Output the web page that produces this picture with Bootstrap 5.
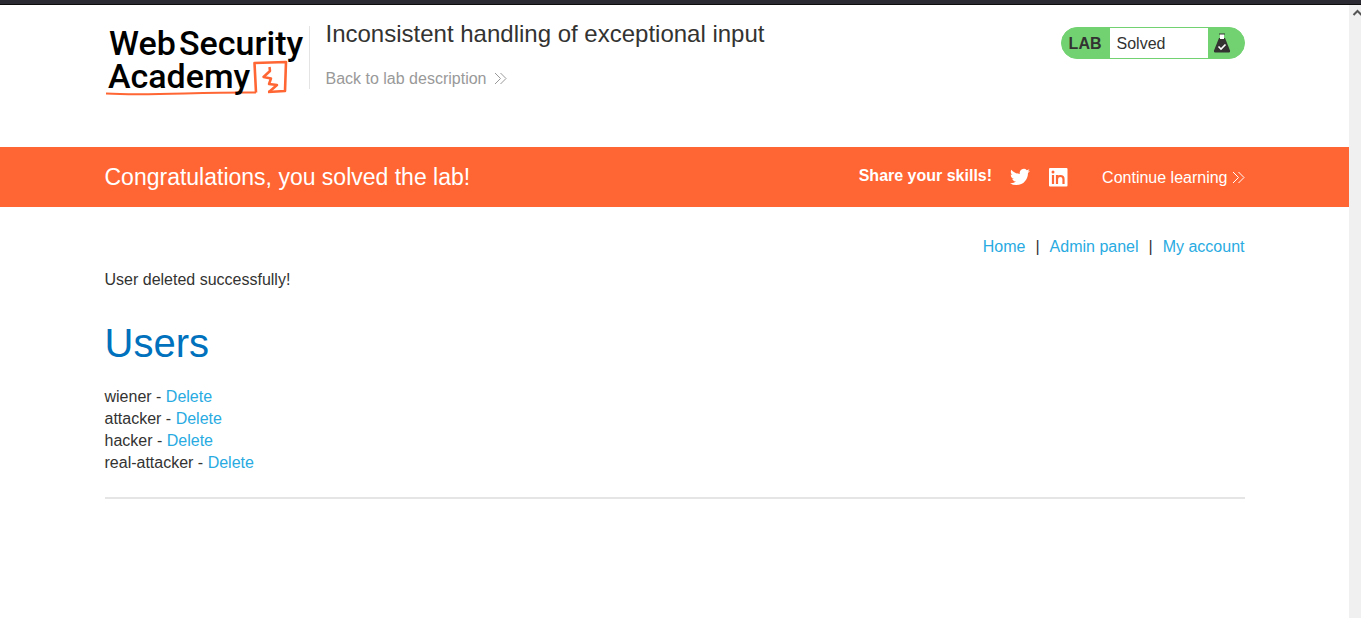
<!DOCTYPE html>
<html lang="en">
<head>
<meta charset="utf-8">
<meta name="viewport" content="width=device-width, initial-scale=1">
<title>Inconsistent handling of exceptional input</title>
<link rel="stylesheet" href="https://cdn.jsdelivr.net/npm/bootstrap@5.3.0/dist/css/bootstrap.min.css">
<style>
body { font: 16px/22px "Liberation Sans", Arial, sans-serif; color: #333332; background: #fff; }
a { color: #29abe2; text-decoration: none; }
.window-edge { height: 5px; background: #2b2a33; border-bottom: 1px solid #0c0c0d; }
.scroll-track { width: 12px; background: #f0f0f0; }
.page-wrap { max-width: 1140px; width: 100%; margin: 0 auto; }
.lab-header { min-height: 142px; padding-top: 16px; }
.brand-mark { width: 204px; height: 80px; overflow: visible; }
.brand-mark text { font: 500 34px Roboto, sans-serif; fill: #000; }
.lab-title { border-left: 1px solid #e4e4e4; margin-top: 5px; height: 63px; padding-left: 16px; }
.lab-title h1 { font-size: 24px; line-height: 26px; margin: -5px 0 21px; }
.back-link { color: #999; }
.lab-status { height: 32px; margin-top: 6px; border: 1px solid #72d271; border-radius: 16px; background: #72d271; overflow: hidden; }
.lab-status strong { padding: 2px 8px 0 7px; }
.lab-status .state { background: #fff; width: 98px; padding: 2px 0 0 7px; }
.lab-status .flask { width: 36px; padding-left: 5px; }
.solved-band { background: #f63; color: #fff; min-height: 60px; }
.solved-band h2 { font-size: 23px; line-height: 28px; }
.solved-band a { color: #fff; }
.share { margin-bottom: 2px; }
.learn { margin-left: 34px; padding-top: 2px; }
.top-links { padding: 29px 0 11px; gap: 10px; }
.users-title { font-size: 40px; line-height: 48px; color: #0071bc; margin: 28px 0 19px; }
.end-rule { height: 2px; background: #e5e5e5; opacity: 1; border: 0; margin: 23px 0; }
</style>
</head>
<body class="d-flex flex-column min-vh-100">
<div class="window-edge"></div>
<div class="d-flex flex-grow-1">
  <div class="flex-grow-1">
    <header class="page-wrap lab-header d-flex align-items-start">
      <a href="#" aria-label="Web Security Academy">
        <svg class="brand-mark d-block" viewBox="0 0 204 80">
          <path d="M1 72.500C45 75 90 71 151 71.500" fill="none" stroke="#f63" stroke-width="2"/>
          <path d="M151 71.500L149.500 42L181 41L180 70L163 71" fill="none" stroke="#f63" stroke-width="2.600" stroke-linejoin="round"/>
          <path d="M164.500 46L165 50L158.500 56L166 57.500L164 63L172 64L164 71" fill="none" stroke="#f63" stroke-width="2.500" stroke-linejoin="round"/>
          <text x="4" y="34">Web</text><text x="74" y="34">Security</text>
          <text x="3" y="67">Academy</text>
        </svg>
      </a>
      <div class="lab-title">
        <h1>Inconsistent handling of exceptional input</h1>
        <a class="back-link d-inline-flex align-items-center gap-2" href="#">Back to lab description
          <svg width="13" height="13" viewBox="0 0 13 13" fill="none" stroke="currentColor"><path d="M1 0L6.500 5.500L1 11M6.500 0L12 5.500L6.500 11"/></svg></a>
      </div>
      <div class="lab-status d-flex align-items-stretch ms-auto">
        <strong class="d-flex align-items-center">LAB</strong>
        <span class="state d-flex align-items-center">Solved</span>
        <span class="flask d-flex align-items-center">
          <svg width="18" height="20" viewBox="0 0 18 20"><path d="M6 5L1 17.500Q.5 19.500 2 19.500H16Q17.500 19.500 17 17.500L12 5Z" fill="#333332"/><path d="M7 1H11V6H7Z" fill="#fff"/><path d="M6 1H12" stroke="#333332"/><path d="M5.500 13.500L8 16L12.500 11.500" fill="none" stroke="#fff" stroke-width="1.600"/></svg>
        </span>
      </div>
    </header>
    <section class="solved-band d-flex">
      <div class="page-wrap d-flex align-items-center">
        <h2 class="m-0 me-auto">Congratulations, you solved the lab!</h2>
        <strong class="share">Share your skills!</strong>
        <a href="#" class="ms-3" aria-label="Share on Twitter"><svg class="d-block" width="24" height="24" viewBox="0 0 24 24" fill="#fff"><path transform="translate(2 2) scale(.8333)" d="M23.950 4.570a10 10 0 0 1-2.820.780 4.960 4.960 0 0 0 2.160-2.730c-.950.560-2.010.960-3.130 1.190a4.920 4.920 0 0 0-8.380 4.480C7.690 8.090 4.070 6.130 1.640 3.160a4.820 4.820 0 0 0-.670 2.480c0 1.710.870 3.210 2.190 4.100a4.900 4.900 0 0 1-2.230-.620v.060a4.920 4.920 0 0 0 3.950 4.830 5 5 0 0 1-2.210.080 4.940 4.940 0 0 0 4.600 3.420A9.870 9.870 0 0 1 0 19.540a14 14 0 0 0 7.560 2.210c9.050 0 14-7.500 14-13.980 0-.210 0-.420-.020-.630a9.900 9.900 0 0 0 2.410-2.570z"/></svg></a>
        <a href="#" class="ms-3" aria-label="Share on LinkedIn"><svg class="d-block" width="20" height="20" viewBox="0 0 20 20"><rect x="1" y="1" width="18.500" height="18.500" rx="1" fill="#fff"/><path d="M5 8V17M9 8V17M9 12Q9.200 9 12.300 9Q15.500 9 15.500 12V17" fill="none" stroke="#f63" stroke-width="2.200"/><circle cx="5" cy="5" r="1.500" fill="#f63"/></svg></a>
        <a href="#" class="learn d-inline-flex align-items-center gap-1">Continue learning
          <svg width="13" height="13" viewBox="0 0 13 13" fill="none" stroke="currentColor"><path d="M1 0L6.500 5.500L1 11M6.500 0L12 5.500L6.500 11"/></svg></a>
      </div>
    </section>
    <main class="page-wrap">
      <nav class="top-links d-flex justify-content-end"><a href="#">Home</a><span>|</span><a href="#">Admin panel</a><span>|</span><a href="#">My account</a></nav>
      <p class="mb-0">User deleted successfully!</p>
      <h1 class="users-title">Users</h1>
      <div>wiener - <a href="#">Delete</a></div>
      <div>attacker - <a href="#">Delete</a></div>
      <div>hacker - <a href="#">Delete</a></div>
      <div>real-attacker - <a href="#">Delete</a></div>
      <hr class="end-rule">
    </main>
  </div>
  <div class="scroll-track" aria-hidden="true"><svg class="d-block" width="12" height="12" viewBox="0 0 12 12"><path d="M4.500 10L8.500 6L12.500 10" fill="none" stroke="#555" stroke-width="2"/></svg></div>
</div>
<script src="https://cdn.jsdelivr.net/npm/bootstrap@5.3.0/dist/js/bootstrap.bundle.min.js"></script>
</body>
</html>
